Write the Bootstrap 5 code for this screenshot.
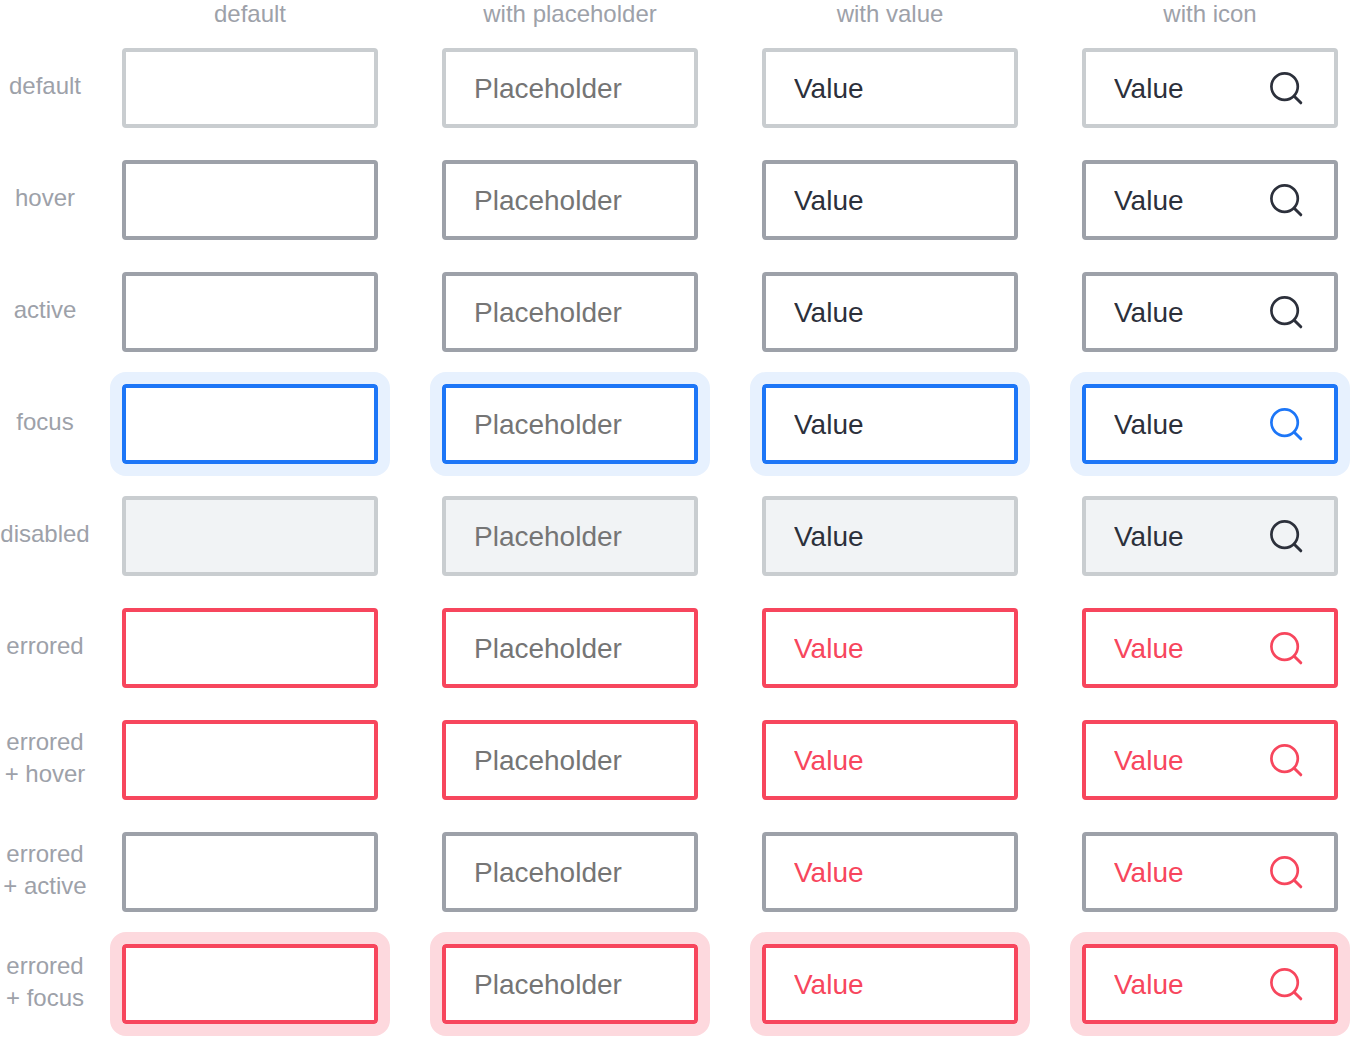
<!DOCTYPE html>
<html lang="en">
<head>
<meta charset="utf-8">
<meta name="viewport" content="width=device-width, initial-scale=1">
<title>Input states</title>
<link href="https://cdn.jsdelivr.net/npm/bootstrap@5.3.0/dist/css/bootstrap.min.css" rel="stylesheet">
<style>
  :root { --ink: #2c303b; --muted: #9da1a9; --line: #c9cdd0; --accent: #1d76f7; --danger: #f7465d; }
  body { background: #fff; color: var(--ink); font-family: "Liberation Sans", Arial, sans-serif; }
  .sheet { padding: 0 32px 16px 0; }
  .sheet-head { margin-bottom: 20px; line-height: 28px; }
  .sheet-rows { gap: 32px; }
  .state-line { gap: 32px; }
  .state-fields { gap: 64px; }
  .state-fields > * { flex: 1 1 0; min-width: 0; }
  .caption-text { color: var(--muted); font-size: 24px; }
  .state-name { width: 90px; line-height: 32px; padding-bottom: 4px; }
  .form-control.field { height: 80px; padding: 2px 28px 0; border: 4px solid var(--line); border-radius: 4px; background: #fff; color: var(--ink); font-size: 28px; line-height: 36px; }
  .form-control.field::placeholder { color: #757575; opacity: 1; }
  .has-icon .form-control.field { padding-right: 80px; }
  .field-icon { right: 36px; width: 32px; height: 32px; pointer-events: none; color: var(--ink); overflow: visible; }
  .is-hovered .form-control.field, .is-pressed .form-control.field { border-color: var(--muted); }
  .is-focused .form-control.field, .form-control.field:focus { border-color: var(--accent); outline: 12px solid #e7f1fe; box-shadow: none; }
  .is-focused .field-icon { color: var(--accent); }
  .form-control.field:disabled { background: #f1f3f5; opacity: 1; }
  .is-errored .form-control.field { border-color: var(--danger); color: var(--danger); }
  .is-errored .field-icon { color: var(--danger); }
  .is-errored.is-pressed .form-control.field { border-color: var(--muted); }
  .is-errored.is-focused .form-control.field, .is-errored .form-control.field:focus { border-color: var(--danger); outline: 12px solid #fdd9de; }
</style>
</head>
<body>
<svg class="d-none" aria-hidden="true">
  <symbol id="search" viewBox="0 0 32 32" overflow="visible">
    <g fill="none" stroke="currentColor" stroke-width="2.7"><circle cx="14.6" cy="14.6" r="13.2"/><path stroke-width="3" stroke-linecap="round" d="M24.2 24.2l6.6 6.6"/></g>
  </symbol>
</svg>
<main class="sheet">
  <div class="sheet-head state-line d-flex caption-text text-center">
    <div class="state-name flex-shrink-0 p-0"></div>
    <div class="state-fields d-flex flex-fill">
      <div id="c1">default</div><div id="c2">with placeholder</div><div id="c3">with value</div><div id="c4">with icon</div>
    </div>
  </div>
  <div class="sheet-rows d-flex flex-column">

    <div class="state-line d-flex align-items-center">
      <div id="r1" class="state-name caption-text flex-shrink-0 text-center">default</div>
      <div class="state-fields d-flex flex-fill">
        <div><input type="text" class="form-control field" aria-labelledby="r1 c1"></div>
        <div><input type="text" class="form-control field" placeholder="Placeholder" aria-labelledby="r1 c2"></div>
        <div><input type="text" class="form-control field" value="Value" aria-labelledby="r1 c3"></div>
        <div class="has-icon position-relative"><input type="text" class="form-control field" value="Value" aria-labelledby="r1 c4"><svg class="field-icon position-absolute top-50 translate-middle-y" aria-hidden="true"><use href="#search"/></svg></div>
      </div>
    </div>

    <div class="state-line is-hovered d-flex align-items-center">
      <div id="r2" class="state-name caption-text flex-shrink-0 text-center">hover</div>
      <div class="state-fields d-flex flex-fill">
        <div><input type="text" class="form-control field" aria-labelledby="r2 c1"></div>
        <div><input type="text" class="form-control field" placeholder="Placeholder" aria-labelledby="r2 c2"></div>
        <div><input type="text" class="form-control field" value="Value" aria-labelledby="r2 c3"></div>
        <div class="has-icon position-relative"><input type="text" class="form-control field" value="Value" aria-labelledby="r2 c4"><svg class="field-icon position-absolute top-50 translate-middle-y" aria-hidden="true"><use href="#search"/></svg></div>
      </div>
    </div>

    <div class="state-line is-pressed d-flex align-items-center">
      <div id="r3" class="state-name caption-text flex-shrink-0 text-center">active</div>
      <div class="state-fields d-flex flex-fill">
        <div><input type="text" class="form-control field" aria-labelledby="r3 c1"></div>
        <div><input type="text" class="form-control field" placeholder="Placeholder" aria-labelledby="r3 c2"></div>
        <div><input type="text" class="form-control field" value="Value" aria-labelledby="r3 c3"></div>
        <div class="has-icon position-relative"><input type="text" class="form-control field" value="Value" aria-labelledby="r3 c4"><svg class="field-icon position-absolute top-50 translate-middle-y" aria-hidden="true"><use href="#search"/></svg></div>
      </div>
    </div>

    <div class="state-line is-focused d-flex align-items-center">
      <div id="r4" class="state-name caption-text flex-shrink-0 text-center">focus</div>
      <div class="state-fields d-flex flex-fill">
        <div><input type="text" class="form-control field" aria-labelledby="r4 c1"></div>
        <div><input type="text" class="form-control field" placeholder="Placeholder" aria-labelledby="r4 c2"></div>
        <div><input type="text" class="form-control field" value="Value" aria-labelledby="r4 c3"></div>
        <div class="has-icon position-relative"><input type="text" class="form-control field" value="Value" aria-labelledby="r4 c4"><svg class="field-icon position-absolute top-50 translate-middle-y" aria-hidden="true"><use href="#search"/></svg></div>
      </div>
    </div>

    <div class="state-line d-flex align-items-center">
      <div id="r5" class="state-name caption-text flex-shrink-0 text-center">disabled</div>
      <div class="state-fields d-flex flex-fill">
        <div><input type="text" class="form-control field" aria-labelledby="r5 c1" disabled></div>
        <div><input type="text" class="form-control field" placeholder="Placeholder" aria-labelledby="r5 c2" disabled></div>
        <div><input type="text" class="form-control field" value="Value" aria-labelledby="r5 c3" disabled></div>
        <div class="has-icon position-relative"><input type="text" class="form-control field" value="Value" aria-labelledby="r5 c4" disabled><svg class="field-icon position-absolute top-50 translate-middle-y" aria-hidden="true"><use href="#search"/></svg></div>
      </div>
    </div>

    <div class="state-line is-errored d-flex align-items-center">
      <div id="r6" class="state-name caption-text flex-shrink-0 text-center">errored</div>
      <div class="state-fields d-flex flex-fill">
        <div><input type="text" class="form-control field" aria-labelledby="r6 c1" aria-invalid="true"></div>
        <div><input type="text" class="form-control field" placeholder="Placeholder" aria-labelledby="r6 c2" aria-invalid="true"></div>
        <div><input type="text" class="form-control field" value="Value" aria-labelledby="r6 c3" aria-invalid="true"></div>
        <div class="has-icon position-relative"><input type="text" class="form-control field" value="Value" aria-labelledby="r6 c4" aria-invalid="true"><svg class="field-icon position-absolute top-50 translate-middle-y" aria-hidden="true"><use href="#search"/></svg></div>
      </div>
    </div>

    <div class="state-line is-errored d-flex align-items-center">
      <div id="r7" class="state-name caption-text flex-shrink-0 text-center">errored<br>+ hover</div>
      <div class="state-fields d-flex flex-fill">
        <div><input type="text" class="form-control field" aria-labelledby="r7 c1" aria-invalid="true"></div>
        <div><input type="text" class="form-control field" placeholder="Placeholder" aria-labelledby="r7 c2" aria-invalid="true"></div>
        <div><input type="text" class="form-control field" value="Value" aria-labelledby="r7 c3" aria-invalid="true"></div>
        <div class="has-icon position-relative"><input type="text" class="form-control field" value="Value" aria-labelledby="r7 c4" aria-invalid="true"><svg class="field-icon position-absolute top-50 translate-middle-y" aria-hidden="true"><use href="#search"/></svg></div>
      </div>
    </div>

    <div class="state-line is-errored is-pressed d-flex align-items-center">
      <div id="r8" class="state-name caption-text flex-shrink-0 text-center">errored<br>+ active</div>
      <div class="state-fields d-flex flex-fill">
        <div><input type="text" class="form-control field" aria-labelledby="r8 c1" aria-invalid="true"></div>
        <div><input type="text" class="form-control field" placeholder="Placeholder" aria-labelledby="r8 c2" aria-invalid="true"></div>
        <div><input type="text" class="form-control field" value="Value" aria-labelledby="r8 c3" aria-invalid="true"></div>
        <div class="has-icon position-relative"><input type="text" class="form-control field" value="Value" aria-labelledby="r8 c4" aria-invalid="true"><svg class="field-icon position-absolute top-50 translate-middle-y" aria-hidden="true"><use href="#search"/></svg></div>
      </div>
    </div>

    <div class="state-line is-errored is-focused d-flex align-items-center">
      <div id="r9" class="state-name caption-text flex-shrink-0 text-center">errored<br>+ focus</div>
      <div class="state-fields d-flex flex-fill">
        <div><input type="text" class="form-control field" aria-labelledby="r9 c1" aria-invalid="true"></div>
        <div><input type="text" class="form-control field" placeholder="Placeholder" aria-labelledby="r9 c2" aria-invalid="true"></div>
        <div><input type="text" class="form-control field" value="Value" aria-labelledby="r9 c3" aria-invalid="true"></div>
        <div class="has-icon position-relative"><input type="text" class="form-control field" value="Value" aria-labelledby="r9 c4" aria-invalid="true"><svg class="field-icon position-absolute top-50 translate-middle-y" aria-hidden="true"><use href="#search"/></svg></div>
      </div>
    </div>

  </div>
</main>
<script src="https://cdn.jsdelivr.net/npm/bootstrap@5.3.0/dist/js/bootstrap.bundle.min.js"></script>
</body>
</html>
